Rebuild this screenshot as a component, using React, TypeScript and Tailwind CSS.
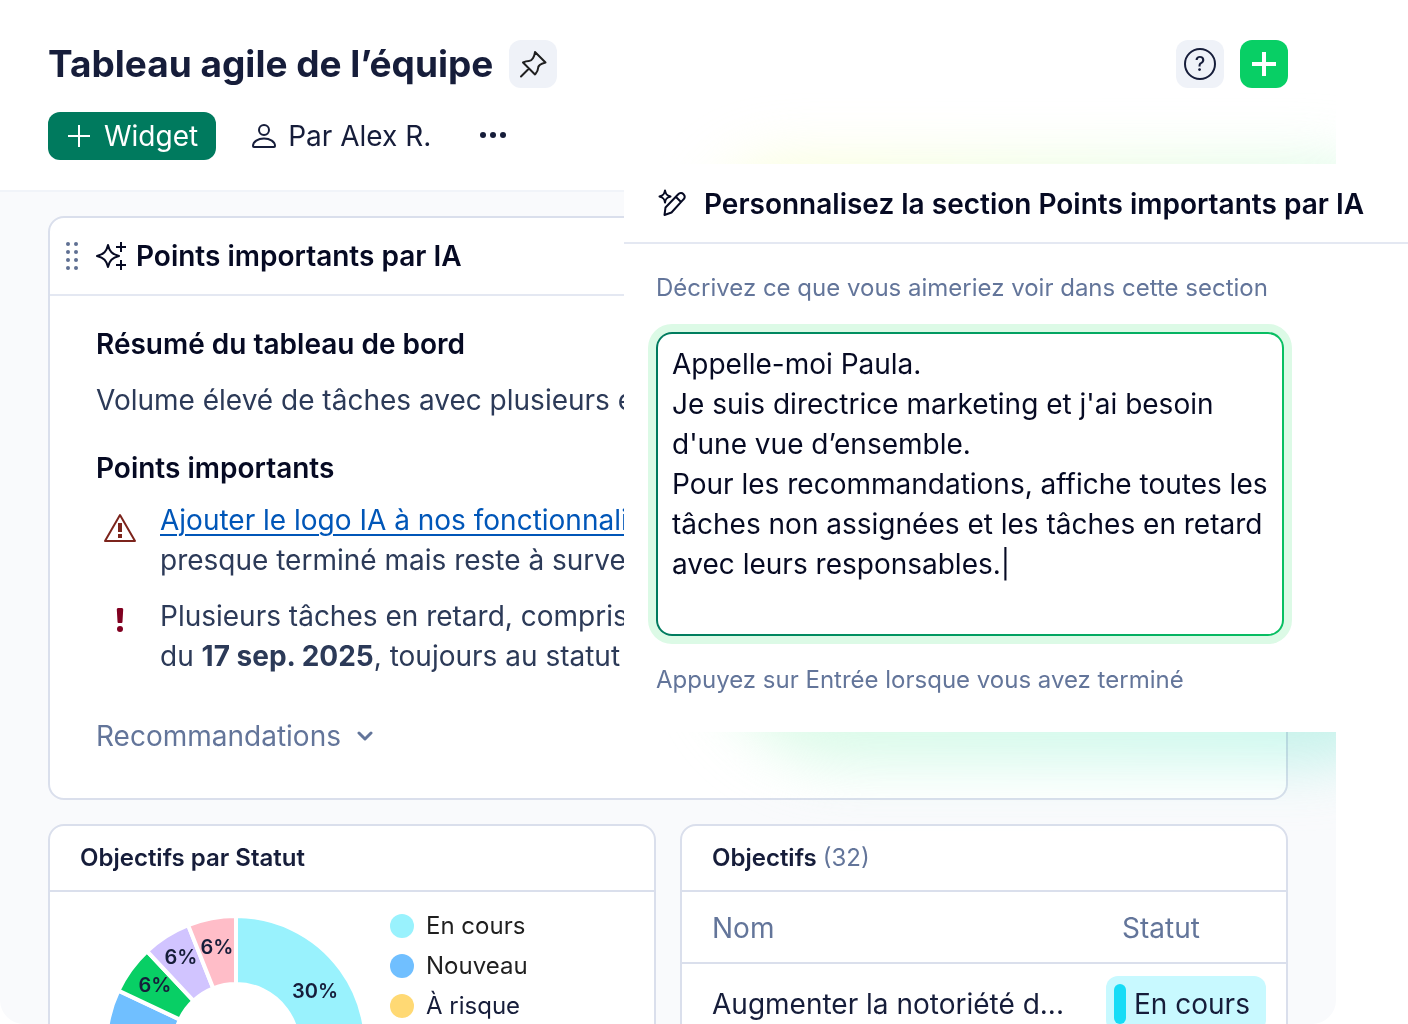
import { ReactNode } from 'react';

const slices = [
  { label: '30%', from: 0, to: 108, color: '#99f2fd', x: 209, y: 82 },
  { label: '', from: 108, to: 180, color: '#ffd974', x: 0, y: 0 },
  { label: '', from: 180, to: 295.2, color: '#70bfff', x: 0, y: 0 },
  { label: '6%', from: 295.2, to: 316.8, color: '#08cf65', x: 49, y: 76 },
  { label: '6%', from: 316.8, to: 338.4, color: '#d1c4ff', x: 75, y: 48 },
  { label: '6%', from: 338.4, to: 360, color: '#ffbdc8', x: 111, y: 38 },
];

const legend = [
  { name: 'En cours', dot: 'bg-[#99f2fd]', text: 'text-[#1f1f1f]' },
  { name: 'Nouveau', dot: 'bg-[#70bfff]', text: 'text-[#1f1f1f]' },
  { name: 'À risque', dot: 'bg-[#ffd974]', text: 'text-[#161d3a]' },
];

const prompt = `Appelle-moi Paula.
Je suis directrice marketing et j'ai besoin d'une vue d’ensemble.
Pour les recommandations, affiche toutes les tâches non assignées et les tâches en retard avec leurs responsables.|`;

function point(r: number, deg: number) {
  const a = ((deg - 90) * Math.PI) / 180;
  return `${(130 + r * Math.cos(a)).toFixed(2)} ${(130 + r * Math.sin(a)).toFixed(2)}`;
}

function slicePath(from: number, to: number) {
  return `M${point(130, from)} A130 130 0 0 1 ${point(130, to)} L${point(62, to)} A62 62 0 0 0 ${point(62, from)} Z`;
}

function Donut() {
  return (
    <svg width="260" height="260" viewBox="0 0 260 260" className="shrink-0">
      {slices.map((s) => (
        <path key={s.from} d={slicePath(s.from, s.to)} fill={s.color} stroke="#fff" strokeWidth="4" />
      ))}
      {slices.filter((s) => s.label).map((s) => (
        <text key={s.from} x={s.x} y={s.y} textAnchor="middle" fontSize="20" fontWeight="600" fill="#161d3a">
          {s.label}
        </text>
      ))}
    </svg>
  );
}

function Card({ title, children }: { title: ReactNode; children: ReactNode }) {
  return (
    <section className="rounded-2xl border-2 border-[#dadfec] bg-white">
      <h2 className="border-b-2 border-[#dadfec] px-[30px] py-4 text-2xl font-semibold text-[#161d3a]">{title}</h2>
      {children}
    </section>
  );
}

function Header() {
  return (
    <header className="border-b-2 border-[#f1f4f9] bg-white px-12 pt-10 pb-[30px] text-[#161d3a]">
      <div className="flex items-center gap-4">
        <h1 className="text-[37px] leading-10 font-bold">Tableau agile de l’équipe</h1>
        <button aria-label="Épingler" className="flex size-12 items-center justify-center rounded-xl bg-[#eff2f8]">
          <svg width="28" height="28" viewBox="0 0 28 28" fill="none" stroke="#1f1f1f" strokeWidth="2" strokeLinejoin="round" strokeLinecap="round">
            <path d="M16 2 26.500 12.500C22 13.500 19 16 19 18.500 19 21 17.500 22.500 16 24.500L4 12.500C6 11.500 7.500 11 10 11 13 11 15.500 6.500 16 2ZM10 18.500l-8 8" />
          </svg>
        </button>
        <button aria-label="Aide" className="ml-auto flex size-12 items-center justify-center rounded-xl bg-[#eff2f8]">
          <span className="flex size-8 items-center justify-center rounded-full border-2 border-[#161d3a] text-xl font-medium">?</span>
        </button>
        <button aria-label="Créer" className="flex size-12 items-center justify-center rounded-xl bg-[#08cf65]">
          <svg width="24" height="24" viewBox="0 0 24 24" stroke="#fff" strokeWidth="4">
            <path d="M12 0v24M0 12h24" />
          </svg>
        </button>
      </div>
      <div className="mt-6 flex items-center">
        <button className="flex h-12 items-center gap-3.5 rounded-xl bg-[#007a5e] px-[18px] text-[28px] text-white">
          <svg width="24" height="24" viewBox="0 0 24 24" stroke="#fff" strokeWidth="2">
            <path d="M13 1v22M2 12h22" />
          </svg>
          Widget
        </button>
        <button className="ml-9 flex items-center gap-3 text-[28px]">
          <svg width="24" height="24" viewBox="0 0 24 24" fill="none" stroke="#161d3a" strokeWidth="2">
            <circle cx="12" cy="6" r="5" />
            <path d="M12 14.500c6 0 11 3 11 7.500 0 .6-.4 1-1 1H2c-.6 0-1-.4-1-1 0-4.500 5-7.500 11-7.500Z" />
          </svg>
          Par Alex R.
        </button>
        <button aria-label="Plus d’options" className="ml-12">
          <svg width="28" height="8" viewBox="0 0 28 8" fill="#161d3a">
            <circle cx="4" cy="3" r="3" />
            <circle cx="14" cy="3" r="3" />
            <circle cx="24" cy="3" r="3" />
          </svg>
        </button>
      </div>
    </header>
  );
}

function Highlights() {
  return (
    <section className="rounded-2xl border-2 border-[#dadfec] bg-white text-[28px] leading-10 whitespace-nowrap text-[#2c3a58]">
      <div className="flex items-center border-b-2 border-[#e4e8f2] px-4 py-[18px]">
        <svg width="12" height="28" viewBox="0 0 12 28" fill="#5f7093">
          {[2, 10, 18, 26].map((y) => (
            <g key={y}>
              <circle cx="2" cy={y} r="2" />
              <circle cx="10" cy={y} r="2" />
            </g>
          ))}
        </svg>
        <svg width="32" height="32" viewBox="0 0 32 32" fill="none" stroke="#060a23" strokeWidth="2" strokeLinejoin="round" className="ml-[18px]">
          <path d="M12 5c1.500 6.500 4 9 11 11-7 2-9.500 4.500-11 11-1.500-6.500-4-9-11-11C8 14 10.500 11.500 12 5ZM25 2v10M20 7h10M25 20v10M20 25h10" />
        </svg>
        <h2 className="ml-2 font-semibold text-[#060a23]">Points importants par IA</h2>
      </div>
      <div className="overflow-hidden px-[46px] pt-7 pb-[42px]">
        <h3 className="font-semibold text-[#060a23]">Résumé du tableau de bord</h3>
        <p className="mt-4">Volume élevé de tâches avec plusieurs en retard</p>
        <h3 className="mt-7 font-semibold text-[#060a23]">Points importants</h3>
        <ul className="mt-3 flex flex-col gap-4">
          <li className="flex gap-6">
            <svg width="32" height="32" viewBox="0 0 32 32" fill="none" stroke="#7c241c" strokeWidth="2" strokeLinejoin="round" className="mt-3 ml-2">
              <path d="M16 3 31 29H1Z" />
              <path d="M16 11v9M16 22v4" strokeWidth="4" />
            </svg>
            <p>
              <a href="#logo" className="text-[#0056b8] underline decoration-2 underline-offset-4">Ajouter le logo IA à nos fonctionnalités</a>
              <br />
              presque terminé mais reste à surveiller
            </p>
          </li>
          <li className="flex gap-6">
            <svg width="32" height="32" viewBox="0 0 32 32" fill="#800020" className="mt-2 ml-2">
              <path d="M12.800 5.500C12.800 4.500 13.500 4 14.500 4h3c1 0 1.700.5 1.700 1.500L18.500 17.500c0 1-.5 1.500-1.300 1.500h-2.400c-.8 0-1.300-.5-1.300-1.500Z" />
              <circle cx="16" cy="25" r="3" />
            </svg>
            <p>
              Plusieurs tâches en retard, compris celles
              <br />
              du <strong className="font-bold">17 sep. 2025</strong>, toujours au statut Nouveau
            </p>
          </li>
        </ul>
        <button className="mt-10 flex items-center gap-4 text-[#63759a]">
          Recommandations
          <svg width="16" height="16" viewBox="0 0 16 16" fill="none" stroke="#63759a" strokeWidth="3" strokeLinecap="round" strokeLinejoin="round">
            <path d="M2 5l6 6 6-6" />
          </svg>
        </button>
      </div>
    </section>
  );
}

function CustomizePanel() {
  return (
    <aside className="absolute top-[164px] right-0 left-[624px] bg-white pb-9">
      <div className="flex items-center gap-4 border-b-2 border-[#e4e8f2] px-8 pt-5 pb-[18px]">
        <svg width="32" height="32" viewBox="0 0 32 32" fill="none" stroke="#060a23" strokeWidth="2" strokeLinejoin="round" className="shrink-0">
          <path d="M9 2.500c.5 3.500 1.500 4.800 5.500 6-4 1.200-5 2.500-5.500 6-.5-3.500-1.500-4.800-5.500-6 4-1.200 5-2.500 5.500-6Z" />
          <path d="M8.500 27l1-7.500L22 6.500c1.800-1.800 4-1.800 5.500-.3s1.500 3.700-.3 5.500L15.500 24.500Z M20 9l5 5" />
        </svg>
        <h2 className="text-[28px] leading-10 font-semibold whitespace-nowrap text-[#060a23]">Personnalisez la section Points importants par IA</h2>
      </div>
      <div className="flex w-[692px] max-w-full flex-col gap-7 px-8 pt-7 text-2xl text-[#63759a]">
        <label htmlFor="prompt">Décrivez ce que vous aimeriez voir dans cette section</label>
        <div className="rounded-2xl bg-linear-to-r from-[#007a5e] to-[#08c062] p-[2px] ring-8 ring-[#dcfae6]">
          <textarea
            id="prompt"
            defaultValue={prompt}
            className="block h-[300px] w-full resize-none overflow-hidden rounded-[14px] bg-white py-2.5 pr-2 pl-3.5 text-[28px] leading-10 text-[#060a23] outline-none"
          />
        </div>
        <p>Appuyez sur Entrée lorsque vous avez terminé</p>
      </div>
    </aside>
  );
}

export default function App() {
  return (
    <div className="relative h-screen overflow-hidden bg-white font-['Inter',sans-serif] [font-optical-sizing:none]">
      <main className="relative mr-[72px] h-full overflow-hidden rounded-b-3xl bg-[#f9fafc]">
        <Header />
        <div className="flex flex-col gap-6 px-12 pt-6">
          <Highlights />
          <div className="grid grid-cols-2 gap-6">
            <Card title="Objectifs par Statut">
              <div className="flex gap-6 px-14 pt-6">
                <Donut />
                <ul className="-mt-1.5 flex flex-col gap-2 text-2xl">
                  {legend.map((l) => (
                    <li key={l.name} className={`flex items-center gap-3 ${l.text}`}>
                      <span className={`size-6 rounded-full ${l.dot}`} />
                      {l.name}
                    </li>
                  ))}
                </ul>
              </div>
            </Card>
            <Card title={<>Objectifs <span className="font-normal text-[#63759a]">(32)</span></>}>
              <table className="w-full table-fixed text-left text-[28px] leading-10">
                <thead className="text-[#63759a]">
                  <tr className="border-b-2 border-[#dadfec]">
                    <th className="pt-4 pb-3.5 pl-[30px] font-normal">Nom</th>
                    <th className="w-[180px] pt-4 pb-3.5 pl-4 font-normal">Statut</th>
                  </tr>
                </thead>
                <tbody className="text-[#161d3a]">
                  <tr>
                    <td className="py-3 pl-[30px] whitespace-nowrap">Augmenter la notoriété d...</td>
                    <td className="py-3">
                      <span className="flex h-14 w-40 items-center gap-2 rounded-xl bg-[#c8f9ff] px-2">
                        <span className="h-10 w-3 rounded-full bg-[#16dcf6]" />
                        En cours
                      </span>
                    </td>
                  </tr>
                </tbody>
              </table>
            </Card>
          </div>
        </div>
        {/* Coloured glow behind the customize panel */}
        <div className="absolute top-[160px] -right-16 left-[708px] h-[604px] rounded-[80px] rounded-bl-[140px] bg-linear-to-br from-[#f8ffd0] from-10% via-[#d2fae0] to-[#b4f4ea] opacity-75 mix-blend-multiply blur-[28px]" />
      </main>
      <CustomizePanel />
    </div>
  );
}
